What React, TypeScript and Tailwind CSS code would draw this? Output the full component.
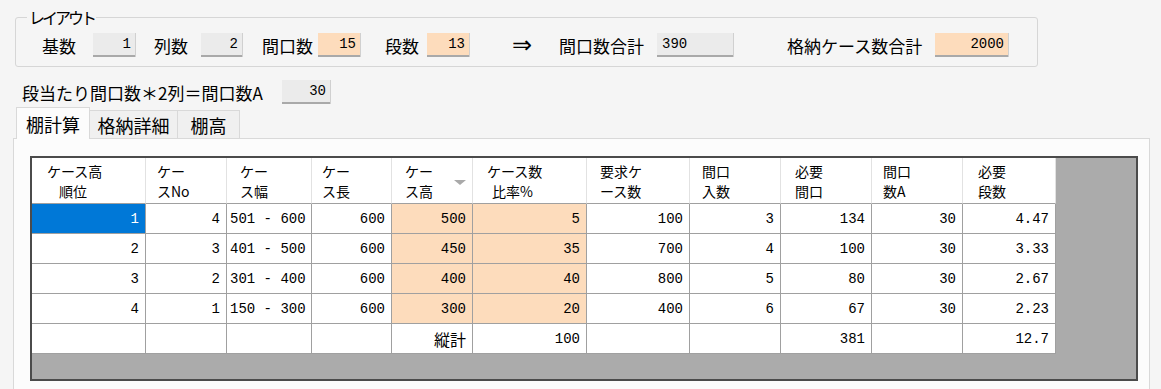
import React from 'react';

const JP = "font-['Noto_Sans_CJK_JP',sans-serif]";
const MONO = "font-['Liberation_Mono',monospace]";

interface FieldProps {
  value: string;
  w: string;
  orange?: boolean;
  left?: boolean;
}

function Field({ value, w, orange, left }: FieldProps) {
  return (
    <div
      className={`flex h-[24px] shrink-0 items-center ${w} ${orange ? 'bg-[#fddcbc]' : 'bg-[#ebebeb]'} ${left ? 'justify-start pl-[5px]' : 'justify-end pr-[4px]'} border-b-2 border-b-[#a9a9a9] shadow-[1px_0_0_#d0d0d0] ${MONO} text-[14px] leading-none`}
    >
      {value}
    </div>
  );
}

function Label({ text, w }: { text: string; w: string }) {
  return <span className={`shrink-0 ${w} ${JP} text-[17px] leading-none`}>{text}</span>;
}

const columns = [
  { w: 'w-[114px]', pl: 'pl-[15px]', lines: ['ケース高', '順位'], indent: 'pl-[12px]' },
  { w: 'w-[81px]', pl: 'pl-[11px]', lines: ['ケー', 'スNo'], indent: '' },
  { w: 'w-[85px]', pl: 'pl-[13px]', lines: ['ケー', 'ス幅'], indent: '' },
  { w: 'w-[80px]', pl: 'pl-[10px]', lines: ['ケー', 'ス長'], indent: '' },
  { w: 'w-[81px]', pl: 'pl-[13px]', lines: ['ケー', 'ス高'], indent: '', sort: true },
  { w: 'w-[114px]', pl: 'pl-[14px]', lines: ['ケース数', '比率%'], indent: 'pl-[5px]' },
  { w: 'w-[103px]', pl: 'pl-[13px]', lines: ['要求ケ', 'ース数'], indent: '' },
  { w: 'w-[91px]', pl: 'pl-[12px]', lines: ['間口', '入数'], indent: '' },
  { w: 'w-[91px]', pl: 'pl-[14px]', lines: ['必要', '間口'], indent: '' },
  { w: 'w-[91px]', pl: 'pl-[11px]', lines: ['間口', '数A'], indent: '' },
  { w: 'w-[93px]', pl: 'pl-[15px]', lines: ['必要', '段数'], indent: '' },
];

const rows = [
  ['1', '4', '501 - 600', '600', '500', '5', '100', '3', '134', '30', '4.47'],
  ['2', '3', '401 - 500', '600', '450', '35', '700', '4', '100', '30', '3.33'],
  ['3', '2', '301 - 400', '600', '400', '40', '800', '5', '80', '30', '2.67'],
  ['4', '1', '150 - 300', '600', '300', '20', '400', '6', '67', '30', '2.23'],
  ['', '', '', '', '縦計', '100', '', '', '381', '', '12.7'],
];

function Grid() {
  return (
    <div className="h-[225px] w-[1108px] border-2 border-[#4b4b4b] bg-[#ababab]">
      <div className="flex">
        {columns.map((c, i) => (
          <div
            key={i}
            className={`relative flex h-[46px] shrink-0 flex-col justify-center ${c.w} ${c.pl} border-r border-b border-r-[#e2e2e2] border-b-[#a0a0a0] bg-white ${JP} text-[14px] leading-[20px]`}
          >
            {c.lines.map((l, j) => (
              <span key={j} className={j === 1 ? c.indent : ''}>
                {l}
              </span>
            ))}
            {c.sort && (
              <span className="absolute top-[22px] right-[6px] h-0 w-0 border-t-[5px] border-r-[6px] border-l-[6px] border-t-[#a9a9a9] border-r-transparent border-l-transparent" />
            )}
          </div>
        ))}
      </div>
      {rows.map((r, ri) => (
        <div key={ri} className="flex">
          {r.map((v, ci) => {
            const selected = ri === 0 && ci === 0;
            const orange = ri < 4 && (ci === 4 || ci === 5);
            const bg = selected ? 'bg-[#0078d7] text-white' : orange ? 'bg-[#fddcbc]' : 'bg-white';
            const align = ci === 2 ? 'justify-start pl-[3px]' : 'justify-end pr-[6px]';
            const font = v === '縦計' ? `${JP} text-[16px]` : `${MONO} text-[14px]`;
            return (
              <div
                key={ci}
                className={`flex h-[30px] shrink-0 items-center ${columns[ci].w} ${align} ${bg} border-r border-b border-[#a0a0a0] ${font} leading-none`}
              >
                {v}
              </div>
            );
          })}
        </div>
      ))}
    </div>
  );
}

export default function App() {
  return (
    <div className="h-[389px] w-[1161px] overflow-hidden bg-[#f5f5f5] pt-[17px] text-black">
      {/* レイアウト group */}
      <div className="relative ml-[15px] flex h-[50px] w-[1023px] items-center rounded-[3px] border border-[#d6d6d6] pt-[6px] pl-[26px]">
        <span className={`absolute -top-[10px] left-[11px] bg-[#f5f5f5] px-[2px] ${JP} text-[16px] leading-[18px] tracking-[-3px]`}>
          レイアウト
        </span>
        <Label text="基数" w="w-[51px]" />
        <Field value="1" w="w-[42px]" />
        <span className="w-[19px] shrink-0" />
        <Label text="列数" w="w-[47px]" />
        <Field value="2" w="w-[41px]" />
        <span className="w-[20px] shrink-0" />
        <Label text="間口数" w="w-[56px]" />
        <Field value="15" w="w-[42px]" orange />
        <span className="w-[25px] shrink-0" />
        <Label text="段数" w="w-[42px]" />
        <Field value="13" w="w-[42px]" orange />
        <span className="w-[43px] shrink-0" />
        <span className="w-[47px] shrink-0 font-['DejaVu_Sans',sans-serif] text-[24px] leading-none">⇒</span>
        <Label text="間口数合計" w="w-[98px]" />
        <Field value="390" w="w-[76px]" left />
        <span className="w-[54px] shrink-0" />
        <Label text="格納ケース数合計" w="w-[148px]" />
        <Field value="2000" w="w-[73px]" orange />
      </div>

      {/* 段当たり間口数 row */}
      <div className="mt-[13px] flex h-[24px] items-center pl-[22px]">
        <Label text="段当たり間口数＊2列＝間口数A" w="w-[260px]" />
        <Field value="30" w="w-[48px]" />
      </div>

      {/* tabs */}
      <div className="mt-[2px] ml-[13px]">
        <div className="flex h-[32px] items-end pl-[3px]">
          <div className={`relative z-10 -mb-px flex h-[32px] w-[74px] items-center justify-center border border-b-0 border-[#d9d9d9] bg-[#fcfcfc] ${JP} text-[18px] leading-none`}>
            棚計算
          </div>
          <div className={`flex h-[28px] w-[88px] items-center justify-center border border-l-0 border-b-0 border-[#d9d9d9] bg-[#f0f0f0] ${JP} text-[18px] leading-none`}>
            格納詳細
          </div>
          <div className={`flex h-[28px] w-[62px] items-center justify-center border border-l-0 border-b-0 border-[#d9d9d9] bg-[#f0f0f0] ${JP} text-[18px] leading-none`}>
            棚高
          </div>
        </div>
        <div className="h-[260px] w-[1137px] border border-[#d9d9d9] bg-[#fcfcfc] pt-[17px] pl-[16px]">
          <Grid />
        </div>
      </div>
    </div>
  );
}
